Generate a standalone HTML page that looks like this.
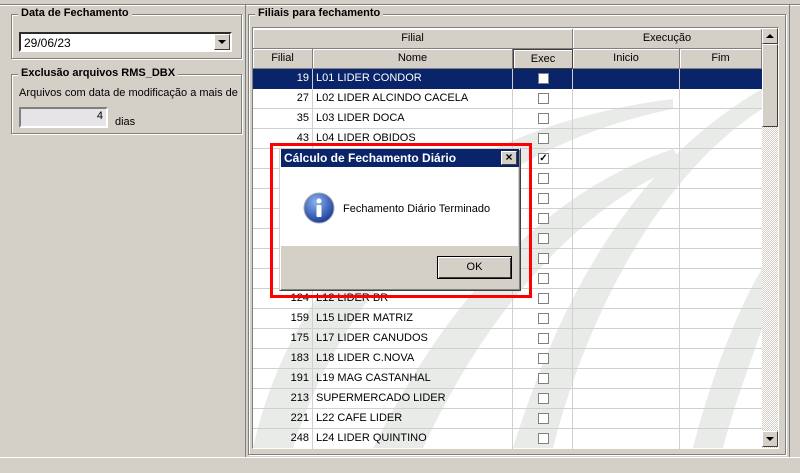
<!DOCTYPE html>
<html><head><style>
*{margin:0;padding:0;box-sizing:border-box}
body{width:800px;height:473px;background:#d4d0c8;font-family:"Liberation Sans",Arial,sans-serif;font-size:11px;color:#000;position:relative;overflow:hidden}
.a{position:absolute}
.grp{position:absolute;border:1px solid #808080;box-shadow:1px 1px 0 #fff,inset 1px 1px 0 #fff}
.lg{position:absolute;background:#d4d0c8;font-weight:bold;font-size:11px;padding:0 3px;top:-8px;left:6px}
.hd{position:absolute;background:#d4d0c8;border-right:1px solid #808080;border-bottom:1px solid #808080;box-shadow:inset 1px 1px 0 #fff;text-align:center;line-height:19px}
.row{position:absolute;left:253px;width:509px;height:20px;border-bottom:1px solid #d0d0d0}
.c{position:absolute;top:0;height:20px;line-height:19px;border-right:1px solid #d0d0d0}
.cb{position:absolute;left:285px;top:4px;width:11px;height:11px;border:1px solid #808080;background:#fff}
</style></head><body>
<div class="a" style="left:0;top:4px;width:800px;height:1px;background:#808080"></div>
<div class="a" style="left:0;top:5px;width:800px;height:1px;background:#fff"></div>
<div class="a" style="left:0;top:457px;width:800px;height:1px;background:#fff"></div>
<div class="a" style="left:245px;top:5px;width:1px;height:452px;background:#808080"></div>
<div class="a" style="left:789px;top:5px;width:1px;height:452px;background:#808080"></div>

<div class="grp" style="left:11px;top:14px;width:231px;height:45px"><span class="lg">Data de Fechamento</span></div>
<div class="a" style="left:19px;top:32px;width:213px;height:20px;background:#fff;border:2px inset #808080;border-color:#808080 #fff #fff #808080;padding:2px 3px;font-size:12px">29/06/23</div>
<div class="a" style="left:214px;top:34px;width:16px;height:16px;background:#d4d0c8;border:1px solid;border-color:#fff #404040 #404040 #fff"><div style="margin:5px auto 0;width:0;height:0;border-left:4px solid transparent;border-right:4px solid transparent;border-top:4px solid #000"></div></div>

<div class="grp" style="left:11px;top:74px;width:231px;height:60px"><span class="lg">Exclusão arquivos RMS_DBX</span></div>
<div class="a" style="left:19px;top:87px;font-size:11px">Arquivos com data de modificação a mais de</div>
<div class="a" style="left:19px;top:107px;width:89px;height:21px;background:#e6e4e6;border:2px solid;border-color:#808080 #fff #fff #808080;text-align:right;padding:1px 3px">4</div>
<div class="a" style="left:115px;top:116px">dias</div>

<div class="grp" style="left:248px;top:14px;width:538px;height:441px"><span class="lg">Filiais para fechamento</span></div>
<div class="a" style="left:252px;top:27px;width:527px;height:422px;border:1px solid;border-color:#808080 #fff #fff #808080;background:#fff"></div>
<svg class="a" style="left:253px;top:69px" width="509" height="379">
<g fill="#e8ebe8">
<path d="M260 379 C300 250 370 100 509 20 L509 40 C400 110 330 260 300 379Z"/>
<path d="M0 379 C40 200 180 60 420 30 L420 40 C220 80 90 220 40 379Z"/>
<path d="M120 379 C200 220 300 120 420 80 L430 95 C320 140 230 250 170 379Z"/>
<path d="M440 379 C460 300 490 230 509 200 L509 260 C495 300 480 340 470 379Z"/>
</g></svg>
<div class="hd" style="left:253px;top:29px;width:320px;height:20px">Filial</div>
<div class="hd" style="left:573px;top:29px;width:189px;height:20px">Execução</div>
<div class="hd" style="left:253px;top:49px;width:60px;height:20px">Filial</div>
<div class="hd" style="left:313px;top:49px;width:200px;height:20px">Nome</div>
<div class="hd" style="left:513px;top:49px;width:60px;height:20px;border:1px solid #404040">Exec</div>
<div class="hd" style="left:573px;top:49px;width:107px;height:20px">Inicio</div>
<div class="hd" style="left:680px;top:49px;width:82px;height:20px">Fim</div>

<div class="row" style="top:69px;background:#0a246a;color:#fff;border-bottom-color:#0a246a"><div class="c" style="left:0;width:60px;text-align:right;padding-right:3px;border-color:#d0d0d0">19</div><div class="c" style="left:60px;width:200px;padding-left:3px">L01 LIDER CONDOR</div><div class="c" style="left:260px;width:60px"></div><div class="c" style="left:320px;width:107px"></div><div class="cb"></div></div>
<div id="rows"></div>
<script>
var d=[["27","L02 LIDER ALCINDO CACELA"],["35","L03 LIDER DOCA"],["43","L04 LIDER OBIDOS"],["",""],["",""],["",""],["",""],["",""],["",""],["",""],["124","L12 LIDER BR"],["159","L15 LIDER MATRIZ"],["175","L17 LIDER CANUDOS"],["183","L18 LIDER C.NOVA"],["191","L19 MAG CASTANHAL"],["213","SUPERMERCADO LIDER"],["221","L22 CAFE LIDER"],["248","L24 LIDER QUINTINO"]];
var h="";d.forEach(function(r,i){var y=89+i*20;h+='<div class="row" style="top:'+y+'px;'+(y+20>448?'height:'+(448-y)+'px;border-bottom:none':'')+'"><div class="c" style="left:0;width:60px;text-align:right;padding-right:3px">'+r[0]+'</div><div class="c" style="left:60px;width:200px;padding-left:3px">'+r[1]+'</div><div class="c" style="left:260px;width:60px"></div><div class="c" style="left:320px;width:107px"></div><div class="cb">'+(i==3?'<div style="font-size:10px;line-height:9px;text-align:center;font-weight:bold">✓</div>':'')+'</div></div>'});
document.getElementById("rows").innerHTML=h;
</script>

<div class="a" style="left:762px;top:28px;width:16px;height:420px;background:repeating-conic-gradient(#d4d0c8 0 25%,#fff 0 50%) 0 0/2px 2px"></div>
<div class="a" style="left:762px;top:28px;width:16px;height:16px;background:#d4d0c8;border:1px solid;border-color:#fff #404040 #404040 #fff"><div style="margin:5px auto 0;width:0;height:0;border-left:4px solid transparent;border-right:4px solid transparent;border-bottom:4px solid #000"></div></div>
<div class="a" style="left:762px;top:44px;width:16px;height:83px;background:#d4d0c8;border:1px solid;border-color:#fff #404040 #404040 #fff"></div>
<div class="a" style="left:762px;top:431px;width:16px;height:16px;background:#d4d0c8;border:1px solid;border-color:#fff #404040 #404040 #fff"><div style="margin:5px auto 0;width:0;height:0;border-left:4px solid transparent;border-right:4px solid transparent;border-top:4px solid #000"></div></div>

<div class="a" style="left:279px;top:148px;width:242px;height:143px;background:#d4d0c8;border:1px solid;border-color:#d4d0c8 #404040 #404040 #d4d0c8;box-shadow:inset 1px 1px 0 #fff,inset -1px -1px 0 #808080"></div>
<div class="a" style="left:281px;top:149px;width:238px;height:18px;background:#0a246a;color:#fff;font-weight:bold;font-size:12px;line-height:18px;padding-left:3px">Cálculo de Fechamento Diário</div>
<div class="a" style="left:501px;top:151px;width:16px;height:14px;background:#d4d0c8;border:1px solid;border-color:#fff #404040 #404040 #fff;text-align:center;font-size:12px;line-height:11px;font-weight:bold">×</div>
<div class="a" style="left:281px;top:167px;width:237px;height:79px;background:#fff"></div>
<svg class="a" style="left:303px;top:192px" width="32" height="32"><defs><radialGradient id="g" cx="40%" cy="30%" r="70%"><stop offset="0" stop-color="#8ab4f0"/><stop offset="1" stop-color="#1c3e9c"/></radialGradient></defs><circle cx="16" cy="16" r="15" fill="url(#g)" stroke="#aaa"/><circle cx="16" cy="9" r="2.5" fill="#fff"/><rect x="13.5" y="13" width="5" height="12" rx="1" fill="#fff"/></svg>
<div class="a" style="left:343px;top:203px">Fechamento Diário Terminado</div>
<div class="a" style="left:437px;top:256px;width:75px;height:23px;border:1px solid #000;background:#d4d0c8;box-shadow:inset 1px 1px 0 #fff,inset -1px -1px 0 #404040;text-align:center;line-height:21px">OK</div>
<div class="a" style="left:270px;top:143px;width:262px;height:155px;border:3px solid #f00"></div>
</body></html>
